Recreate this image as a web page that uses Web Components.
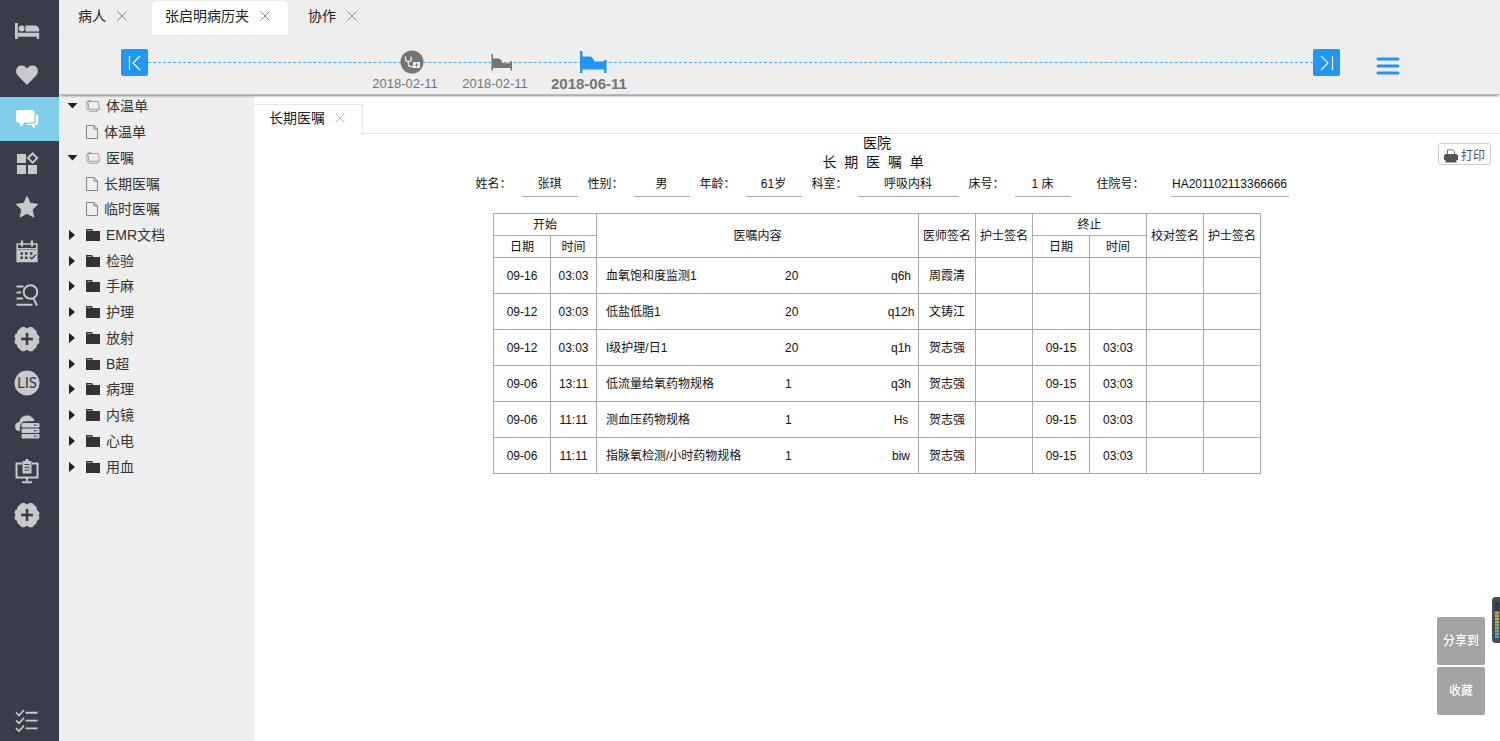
<!DOCTYPE html>
<html lang="zh-CN">
<head>
<meta charset="utf-8">
<title>张启明病历夹</title>
<style>
  html, body { margin: 0; height: 100%; }
  body { font: 14px/20px "Liberation Sans", "Noto Sans CJK SC", sans-serif; color: #222; background: #fff; }
</style>
</head>
<body>
<record-app></record-app>
<script>
const RESET = `
  *, *::before, *::after { box-sizing: border-box; }
  button { font: inherit; color: inherit; background: none; border: 0; padding: 0; margin: 0; cursor: pointer; }
  a { color: inherit; text-decoration: none; }
  ul { list-style: none; margin: 0; padding: 0; }
  svg { display: block; flex: none; }
`;

class Base extends HTMLElement {
  connectedCallback() {
    if (this.shadowRoot) return;
    this.attachShadow({ mode: 'open' }).innerHTML = `<style>${RESET}${this.css()}</style>${this.html()}`;
  }
  css() { return ':host { display: block; }'; }
  html() { return '<slot></slot>'; }
}

const CLOVER = `<path fill="currentColor" stroke="currentColor" stroke-width="1.600" stroke-linejoin="round" d="M8 1.800h2.500L13 3.600l2.500-1.800H18l4 4v2.400l2.500 2.300v2.200L23 13l1.500 1.600v2.200L22 18.500v2l-4 3.900h-2.500L13 22.600l-2.500 1.800H8l-4-3.900v-2l-2.500-1.700v-2.200L3 13l-1.500-1.300V9.500L4 7.700V5.800z"/><path d="M13 7v12M7 13h12" stroke="#393d49" stroke-width="2.600"/>`;

const GLYPHS = {
  bed: `<g fill="currentColor"><rect x="1" y="5" width="2.800" height="16"/><circle cx="7.600" cy="10.400" r="3"/><path d="M11.500 7.500h9c3 0 4.700 1.600 4.700 4.500v1.500H11.500zM3.800 14.800h21.400V21h-2.500v-2.200H3.800z"/></g>`,
  heart: `<path fill="currentColor" d="M13 23 3.800 13.500C.5 10 2 3.500 7.500 3.500 10.500 3.500 12.200 5.300 13 6.800 13.800 5.300 15.500 3.500 18.500 3.500 24 3.500 25.500 10 22.200 13.500z"/>`,
  chat: `<path fill="currentColor" d="M4 4h14.500a2 2 0 0 1 2 2v8.500a2 2 0 0 1-2 2h-8L6.500 21l-.5-4.500H4a2 2 0 0 1-2-2V6a2 2 0 0 1 2-2z"/><path fill="currentColor" d="M21.800 8.200c1.500 0 2.400.8 2.400 2.100v6.700c0 1.300-.8 2-2.200 2h-1.300v4L17 19h-5.500l1.500-1.300h6c1.700 0 2.800-1 2.800-2.700z"/>`,
  blocks: `<g fill="currentColor"><rect x="3" y="4" width="9" height="9"/><rect x="3" y="15" width="9" height="9"/><rect x="14" y="15" width="9" height="9"/></g><path d="M18.600 3.500l4.600 4.600-4.600 4.600L14 8.100z" fill="none" stroke="currentColor" stroke-width="2"/>`,
  star: `<path fill="currentColor" stroke="currentColor" stroke-linejoin="round" d="M13 2.500l3.200 6.900 7.500.9-5.500 5.200 1.500 7.500L13 19.300 6.300 23l1.500-7.500-5.500-5.200 7.500-.9z"/>`,
  calendar: `<path d="M3.200 6v17.500h19.600V6zM3 10.800h20" fill="none" stroke="currentColor" stroke-width="1.600"/><path d="M8 2.500v6M18 2.500v6" stroke="currentColor" stroke-width="2.200"/><path fill="currentColor" d="M3 12h20v12H3z"/><path d="M6.500 15.500h2.400M11 15.500h2.400M16 15.500h2.400M6.500 19.800h2.400M11 19.800h2.400" stroke="#393d49" stroke-width="2.400"/><path d="M15.800 19l2 1.800 4-4" fill="none" stroke="#393d49" stroke-width="1.300"/>`,
  search: `<g fill="none" stroke="currentColor" stroke-width="2"><circle cx="16.500" cy="10" r="6.800"/><path d="M19.500 16.500l3.500 7M2.500 4.500h7M2.500 10.500h4.500M2.500 16.500H9M2.500 22.800h16"/></g>`,
  clover: CLOVER,
  cloud: `<path fill="currentColor" d="M5.500 17.500C2.500 17 1 15 1 12.600 1 10 2.800 8.200 5.300 8 6 4 9 1.500 13 1.500c3.800 0 6.600 2 7.600 5.500L9 7.400 6.500 10z"/><g fill="currentColor"><rect x="7.500" y="9" width="18" height="4.500" rx="1"/><rect x="7.500" y="14.500" width="18" height="4.500" rx="1"/><rect x="7.500" y="20" width="18" height="4.500" rx="1"/></g><path d="M20 11.200h3M20 16.700h3M20 22.200h3" stroke="#393d49" stroke-width="1.300" stroke-dasharray="1.600 .8"/>`,
  monitor: `<path d="M8 5.500H2.500v14h21v-14H18M13 19v4M8 24.200h10" fill="none" stroke="currentColor" stroke-width="2"/><path fill="currentColor" d="M8.500 3h2.500l1-2h2l1 2h2.500v12.500h-9z"/><path d="M10.500 6.500h5M10.500 9.300h5M10.500 12.100h5" stroke="#393d49" stroke-width="1"/>`,
  lis: `<circle cx="13" cy="13" r="12.500" fill="currentColor"/><text x="13" y="18" text-anchor="middle" font-family="Lato, sans-serif" font-size="15" fill="#393d49">LIS</text>`,
  checks: `<path d="M2 6.500l3 3 5-5.500M2 14.300l3 3 5-5.500M2 22.100l3 3 5-5.500" fill="none" stroke="currentColor" stroke-width="1.700"/><path d="M11.500 6.800h12M11.500 14.600h12M11.500 22.400h12" stroke="currentColor" stroke-width="1.900"/>`
};

customElements.define('nav-item', class extends Base {
  css() { return `
    :host { display: block; height: 44px; color: #c8c9cd; }
    :host([active]) { background: #80cdea; color: #fff; }
    button { display: flex; align-items: center; justify-content: center; width: 100%; height: 100%; padding-right: 6px; }
  `; }
  html() {
    return `<button type="button" aria-label="${this.getAttribute('label')}"><svg width="26" height="26" viewBox="0 0 26 26">${GLYPHS[this.getAttribute('glyph')]}</svg></button>`;
  }
});

customElements.define('side-nav', class extends Base {
  css() { return `
    :host { display: block; background: #393d49; }
    nav { display: flex; flex-direction: column; min-height: 100%; padding-top: 9px; }
    .last { margin-top: auto; }
  `; }
  html() {
    const items = [['bed', '住院'], ['heart', '关注'], ['chat', '病历'], ['blocks', '应用'], ['star', '收藏'], ['calendar', '日程'],
      ['search', '检索'], ['clover', '医疗'], ['lis', 'LIS'], ['cloud', '数据'], ['monitor', '报告'], ['clover', '护理']];
    return `<nav>${items.map(([g, l]) => `<nav-item glyph="${g}" label="${l}"${g === 'chat' ? ' active' : ''}></nav-item>`).join('')}
      <nav-item class="last" glyph="checks" label="任务"></nav-item></nav>`;
  }
});

customElements.define('close-button', class extends Base {
  css() { return `:host { display: block; } button { display: block; width: 10px; height: 10px; }`; }
  html() { return `<button type="button" aria-label="关闭"><svg width="10" height="10" viewBox="0 0 10 10"><path d="M.5.5l9 9M9.500.5l-9 9" stroke="currentColor" fill="none"/></svg></button>`; }
});

customElements.define('page-tab', class extends Base {
  css() { return `
    :host { display: flex; align-items: center; gap: 11px; padding: 0 18px 4px 13px; height: 34px; border-radius: 6px 6px 0 0; color: #222; }
    :host([active]) { background: #fff; }
    close-button { color: #888; }
  `; }
  html() { return `<a href="#"><slot></slot></a><close-button></close-button>`; }
});

customElements.define('page-tabs', class extends Base {
  css() { return `
    :host { display: flex; gap: 7px; padding: 1px 0 0 6px; background: #eee; border-bottom: 1px solid #e8e8e8; height: 36px; }
  `; }
  html() { return `<page-tab>病人</page-tab><page-tab active>张启明病历夹</page-tab><page-tab>协作</page-tab>`; }
});

const VISIT = {
  clinic: `<svg width="24" height="24" viewBox="0 0 24 24"><circle cx="12" cy="12" r="11.500" fill="#757575"/><g fill="none" stroke="#eee" stroke-width="1.300"><path d="M5.500 6.500v2c0 2 1 3.200 2.800 3.200s2.900-1.200 2.900-3.200v-2M8.300 11.700v2.300c0 2 1.500 3 4.700 2.500"/></g><rect x="13" y="12" width="7" height="6" fill="#eee"/><path d="M16.500 13.300v3.400M14.800 15h3.400" stroke="#757575"/></svg>`,
  ward: `<svg width="22" height="24" viewBox="0 0 22 24"><path fill="currentColor" d="M.5 4H2v4.500h5.500c2 0 2.800 1.500 3.500 3.500.6 1.200 1.300 1.300 2.500 1.300H19.500V11H21v9.500h-1.500V18H2v2.500H.5z"/></svg>`,
  wardBig: `<svg width="28" height="24" viewBox="0 0 28 24"><path fill="currentColor" d="M1 1h2.500v5.500h7c2 0 3 1.300 3.800 3 .8 1.600 1.500 2 2.700 2H25V10h2.500v13H25v-3.500H3.500V23H1z"/></svg>`
};

customElements.define('visit-marker', class extends Base {
  css() { return `
    :host { display: block; position: relative; min-width: 68px; color: #757575; font-size: 13px; }
    a { display: flex; flex-direction: column; align-items: center; }
    .icon { padding-left: 14px; }
    .date { line-height: 20px; white-space: nowrap; }
    :host([current]) .icon { color: #2196f3; padding-left: 8px; }
    :host([current]) .date { font-size: 15px; font-weight: 700; }
  `; }
  html() { return `<a href="#"><span class="icon">${VISIT[this.getAttribute('kind')]}</span><span class="date"><slot></slot></span></a>`; }
});

customElements.define('visit-timeline', class extends Base {
  css() { return `
    :host { display: flex; align-items: flex-start; position: relative; z-index: 1; height: 59px; padding: 13px 100px 0 62px; background: #eee; border-bottom: 1px solid #bbb; box-shadow: 0 3px 2px -2px #888; }
    .step { flex: none; width: 27px; height: 27px; background: #2196f3; border-radius: 2px; display: grid; place-items: center; }
    .track { flex: 1; position: relative; display: flex; gap: 22px; padding: 1px 0 0 223px; }
    .track::before { content: ""; position: absolute; left: 0; right: 0; top: 13px; border-top: 1px dashed #4ba8f0; }
    .menu { margin: 8px 0 0 36px; display: block; }
  `; }
  html() { return `
    <button class="step" type="button" aria-label="最早"><svg width="14" height="16" viewBox="0 0 14 16"><path d="M1.500 1v14M12 1L5 8l7 7" fill="none" stroke="#fff" stroke-width="1.200"/></svg></button>
    <div class="track">
      <visit-marker kind="clinic">2018-02-11</visit-marker>
      <visit-marker kind="ward">2018-02-11</visit-marker>
      <visit-marker kind="wardBig" current>2018-06-11</visit-marker>
    </div>
    <button class="step" type="button" aria-label="最近"><svg width="14" height="16" viewBox="0 0 14 16"><path d="M12.500 1v14M1 1l7 7-7 7" fill="none" stroke="#fff" stroke-width="1.200"/></svg></button>
    <button class="menu" type="button" aria-label="菜单"><svg width="24" height="18" viewBox="0 0 24 18"><path d="M2 2h20M2 9h20M2 16h20" stroke="#2196f3" stroke-width="3" stroke-linecap="round"/></svg></button>`; }
});

const TREE = [
  ['open', '体温单'], ['leaf', '体温单'], ['open', '医嘱'], ['leaf', '长期医嘱'], ['leaf', '临时医嘱'],
  ['shut', 'EMR文档'], ['shut', '检验'], ['shut', '手麻'], ['shut', '护理'], ['shut', '放射'],
  ['shut', 'B超'], ['shut', '病理'], ['shut', '内镜'], ['shut', '心电'], ['shut', '用血']
];
const ARROW = {
  open: `<svg width="11" height="10" viewBox="0 0 11 10"><path d="M.5 2h10L5.500 7.500z" fill="#222"/></svg>`,
  shut: `<svg width="11" height="10" viewBox="0 0 11 10"><path d="M2 0v10l6-5z" fill="#222"/></svg>`
};
const NODE = {
  open: `<svg width="14" height="12" viewBox="0 0 14 12"><path d="M1.800 1.500L3 9.300H13.500L12.300 1.500zM1.800 1.500L.8 2v7l3.200 2.300h7.500l.8-2M2 1.500L2.500.6H5l.8.9" fill="none" stroke="#999" stroke-width=".9"/></svg>`,
  shut: `<svg width="14" height="12" viewBox="0 0 14 12"><path d="M0 0h6l1 2h7v10H0z" fill="#333"/><path d="M1 1.500h4.500" stroke="#999"/></svg>`,
  leaf: `<svg width="12" height="14" viewBox="0 0 12 14"><path d="M.5.5h7.500l3.500 3.500v9.500H.5zM8 .5V4h3.500" fill="none" stroke="#777" stroke-width=".9"/></svg>`
};

customElements.define('record-tree', class extends Base {
  css() { return `
    :host { display: block; background: #eee; color: #333; }
    ul { display: grid; grid-auto-rows: 1fr; min-height: 386px; }
    li { display: flex; }
    button, a { display: flex; align-items: center; width: 100%; padding: 0 0 3px 8px; text-align: left; line-height: 20px; }
    .icon { margin: 0 6px 0 8px; }
    a { padding-left: 19px; }
  `; }
  html() {
    return `<ul>${TREE.map(([kind, name]) => kind === 'leaf'
      ? `<li><a href="#"><span class="icon">${NODE.leaf}</span>${name}</a></li>`
      : `<li><button type="button" aria-expanded="${kind === 'open'}">${ARROW[kind]}<span class="icon">${NODE[kind]}</span>${name}</button></li>`).join('')}</ul>`;
  }
});

customElements.define('doc-tabs', class extends Base {
  css() { return `
    :host { display: flex; padding-top: 9px; }
    .tab { display: flex; align-items: center; gap: 10px; height: 30px; padding: 0 17px 4px 15px; border: solid #e6e6e6; border-width: 1px 1px 0 0; color: #222; }
    close-button { color: #bbb; }
    .rest { flex: 1; border-bottom: 1px solid #e6e6e6; }
  `; }
  html() { return `<div class="tab"><a href="#"><slot></slot></a><close-button></close-button></div><div class="rest"></div>`; }
});

customElements.define('patient-field', class extends Base {
  css() { return `
    :host { display: flex; line-height: 24px; white-space: nowrap; }
    .label { width: 46px; }
    .value { min-width: 56px; text-align: center; border-bottom: 1px solid #aaa; }
    :host([size="medium"]) .value { min-width: 101px; }
    :host([size="long"]) .label { width: 74px; }
    :host([size="long"]) .value { min-width: 118px; }
    :host([size="long"]) { margin-left: 16px; }
  `; }
  html() { return `<span class="label">${this.getAttribute('label')}：</span><span class="value"><slot></slot></span>`; }
});

const ORDERS = [
  ['09-16', '03:03', '血氧饱和度监测1', '20', 'q6h', '周霞清', '', ''],
  ['09-12', '03:03', '低盐低脂1', '20', 'q12h', '文铸江', '', ''],
  ['09-12', '03:03', 'I级护理/日1', '20', 'q1h', '贺志强', '09-15', '03:03'],
  ['09-06', '13:11', '低流量给氧药物规格', '1', 'q3h', '贺志强', '09-15', '03:03'],
  ['09-06', '11:11', '测血压药物规格', '1', 'Hs', '贺志强', '09-15', '03:03'],
  ['09-06', '11:11', '指脉氧检测/小时药物规格', '1', 'biw', '贺志强', '09-15', '03:03']
];

customElements.define('order-table', class extends Base {
  css() { return `
    :host { display: block; color: #111; }
    table { border-collapse: collapse; table-layout: fixed; width: 768px; font-size: 12px; line-height: 18px; }
    th, td { border: 1px solid #aaa; padding: 0; font-weight: 400; text-align: center; white-space: nowrap; }
    thead tr { height: 22px; }
    tbody tr { height: 36px; }
    col { width: 57px; } col.time { width: 46px; } col.content { width: auto; }
    .order { display: grid; grid-template-columns: 179px 1fr 34px; padding-left: 9px; text-align: left; }
    .order :last-child { text-align: center; }
  `; }
  html() {
    return `<table><colgroup><col><col class="time"><col class="content"><col><col><col><col><col><col></colgroup>
      <thead><tr><th colspan="2">开始</th><th rowspan="2">医嘱内容</th><th rowspan="2">医师签名</th><th rowspan="2">护士签名</th><th colspan="2">终止</th><th rowspan="2">校对签名</th><th rowspan="2">护士签名</th></tr>
      <tr><th>日期</th><th>时间</th><th>日期</th><th>时间</th></tr></thead>
      <tbody>${ORDERS.map(([d, t, name, n, f, doc, ed, et]) => `<tr><td>${d}</td><td>${t}</td><td><div class="order"><span>${name}</span><span>${n}</span><span>${f}</span></div></td><td>${doc}</td><td></td><td>${ed}</td><td>${et}</td><td></td><td></td></tr>`).join('')}</tbody></table>`;
  }
});

customElements.define('order-sheet', class extends Base {
  css() { return `
    :host { display: grid; }
    article, .print { grid-area: 1 / 1; }
    article { display: flex; flex-direction: column; align-items: center; color: #111; }
    h1, h2 { margin: 0; font-size: 14px; font-weight: 400; line-height: 19px; white-space: pre; }
    .patient { display: flex; gap: 10px; padding-left: 10px; margin-bottom: 16px; font-size: 12px; }
    .print { justify-self: end; align-self: start; display: flex; align-items: center; gap: 3px; margin: 9px 9px 0 0; padding: 3px 5px 0; height: 22px; border: 1px solid #ccc; border-radius: 3px; background: #fff; color: #555; font-size: 12px; line-height: 18px; }
  `; }
  html() { return `
    <article>
      <h1>医院</h1>
      <h2>长  期  医  嘱  单  </h2>
      <div class="patient">
        <patient-field label="姓名">张琪</patient-field>
        <patient-field label="性别">男</patient-field>
        <patient-field label="年龄">61岁</patient-field>
        <patient-field label="科室" size="medium">呼吸内科</patient-field>
        <patient-field label="床号">1 床</patient-field>
        <patient-field label="住院号" size="long">HA201102113366666</patient-field>
      </div>
      <order-table></order-table>
    </article>
    <button class="print" type="button"><svg width="14" height="14" viewBox="0 0 14 14"><path d="M3.500 6V.8h5l2 2V6" fill="#fff" stroke="#777"/><path d="M1.500 5h11L14 6.500V11h-1.500v2.500h-11V11H0V6.500z" fill="#555"/></svg>打印</button>`; }
});

customElements.define('quick-actions', class extends Base {
  css() { return `
    :host { position: fixed; right: 15px; bottom: 26px; display: grid; gap: 2px; }
    button { width: 48px; height: 48px; border-radius: 2px; background: #a3a3a3; color: #fff; font-size: 12px; font-weight: 500; line-height: 18px; }
  `; }
  html() { return `<button type="button">分享到</button><button type="button">收藏</button>`; }
});

customElements.define('level-meter', class extends Base {
  css() { return `
    :host { box-sizing: border-box; position: fixed; right: 0; bottom: 98px; width: 8px; height: 46px; padding: 5px 1px 5px 3px; background: #454a5c; border-radius: 4px 0 0 4px; }
    div { height: 100%; background: repeating-linear-gradient(#454a5c88 0 1px, transparent 1px 3px), linear-gradient(#2f3342 25%, #d8a531 25%, #9ab04a 60%, #35b597); }
  `; }
  html() { return `<div></div>`; }
});

customElements.define('record-app', class extends Base {
  css() { return `
    :host { display: grid; grid-template-columns: 59px minmax(0, 1fr); min-height: 100vh; }
    .main { display: grid; grid-template-rows: auto auto 1fr; }
    .body { display: grid; grid-template-columns: 195px minmax(0, 1fr); }
  `; }
  html() { return `
    <side-nav></side-nav>
    <div class="main">
      <page-tabs></page-tabs>
      <visit-timeline></visit-timeline>
      <div class="body">
        <record-tree></record-tree>
        <main><doc-tabs>长期医嘱</doc-tabs><order-sheet></order-sheet></main>
      </div>
    </div>
    <quick-actions></quick-actions>
    <level-meter></level-meter>`; }
});
</script>
</body>
</html>
